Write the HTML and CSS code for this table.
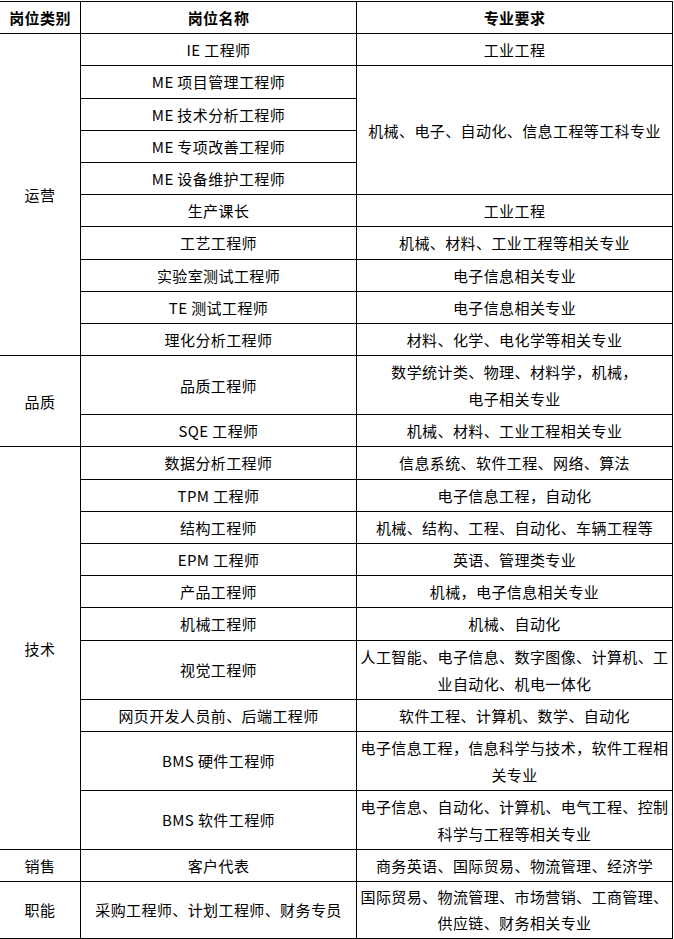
FILE: index.html
```html
<!DOCTYPE html>
<html lang="zh-CN">
<head>
<meta charset="utf-8">
<title>岗位</title>
<link rel="stylesheet" href="styles.css">
</head>
<body>
<table class="jobs">
  <colgroup>
    <col class="c1"><col class="c2"><col class="c3">
  </colgroup>
  <thead>
    <tr><th>岗位类别</th><th>岗位名称</th><th>专业要求</th></tr>
  </thead>
  <tbody>
    <tr><td rowspan="10">运营</td><td>IE 工程师</td><td>工业工程</td></tr>
    <tr><td>ME 项目管理工程师</td><td rowspan="4">机械、电子、自动化、信息工程等工科专业</td></tr>
    <tr><td>ME 技术分析工程师</td></tr>
    <tr><td>ME 专项改善工程师</td></tr>
    <tr><td>ME 设备维护工程师</td></tr>
    <tr><td>生产课长</td><td>工业工程</td></tr>
    <tr><td>工艺工程师</td><td>机械、材料、工业工程等相关专业</td></tr>
    <tr><td>实验室测试工程师</td><td>电子信息相关专业</td></tr>
    <tr><td>TE 测试工程师</td><td>电子信息相关专业</td></tr>
    <tr><td>理化分析工程师</td><td>材料、化学、电化学等相关专业</td></tr>
    <tr><td rowspan="2">品质</td><td>品质工程师</td><td class="nw two">数学统计类、物理、材料学，机械，<br>电子相关专业</td></tr>
    <tr><td>SQE 工程师</td><td>机械、材料、工业工程相关专业</td></tr>
    <tr><td rowspan="10">技术</td><td>数据分析工程师</td><td>信息系统、软件工程、网络、算法</td></tr>
    <tr><td>TPM 工程师</td><td>电子信息工程，自动化</td></tr>
    <tr><td>结构工程师</td><td>机械、结构、工程、自动化、车辆工程等</td></tr>
    <tr><td>EPM 工程师</td><td>英语、管理类专业</td></tr>
    <tr><td>产品工程师</td><td>机械，电子信息相关专业</td></tr>
    <tr><td>机械工程师</td><td>机械、自动化</td></tr>
    <tr><td>视觉工程师</td><td class="nw two">人工智能、电子信息、数字图像、计算机、工<br>业自动化、机电一体化</td></tr>
    <tr><td class="nw">网页开发人员前、后端工程师</td><td>软件工程、计算机、数学、自动化</td></tr>
    <tr><td>BMS 硬件工程师</td><td class="nw two">电子信息工程，信息科学与技术，软件工程相<br>关专业</td></tr>
    <tr><td>BMS 软件工程师</td><td class="nw two">电子信息、自动化、计算机、电气工程、控制<br>科学与工程等相关专业</td></tr>
    <tr><td>销售</td><td>客户代表</td><td>商务英语、国际贸易、物流管理、经济学</td></tr>
    <tr class="last"><td>职能</td><td class="nw">采购工程师、计划工程师、财务专员</td><td class="nw two">国际贸易、物流管理、市场营销、工商管理、<br>供应链、财务相关专业</td></tr>
  </tbody>
</table>
</body>
</html>
```

FILE: styles.css
```css
html, body {
  margin: 0;
  padding: 0;
  background: #ffffff;
}
body {
  font-family: "Noto Sans CJK SC", "Noto Sans", sans-serif;
  font-size: 15px;
  letter-spacing: 0.4px;
  color: #000000;
  overflow: hidden;
}
.jobs {
  border-collapse: collapse;
  table-layout: fixed;
  width: 673px;
  margin: 1px 0 0 -1px;
}
.c1 { width: 81px; }
.c2 { width: 276px; }
.c3 { width: 316px; }
.jobs th,
.jobs td {
  border: 1px solid #000000;
  padding: 2px 1px;
  line-height: 27.2px;
  text-align: center;
  vertical-align: middle;
  font-weight: normal;
}
.jobs th {
  font-weight: bold;
}
.jobs td.two {
  line-height: 27px;
}
.jobs .last td.two {
  line-height: 26px;
}
.nw {
  white-space: nowrap;
}
```
